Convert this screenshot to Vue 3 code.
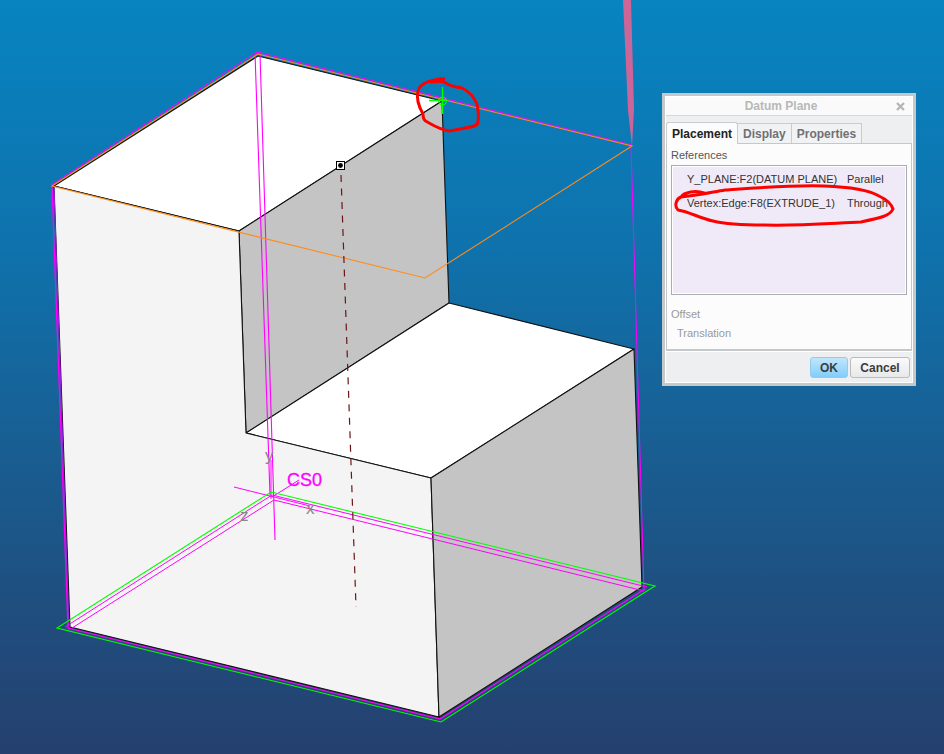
<script setup>
import { ref } from 'vue'

const tabs = ['Placement', 'Display', 'Properties']
const active = ref('Placement')
const references = [
  { name: 'Y_PLANE:F2(DATUM PLANE)', constraint: 'Parallel' },
  { name: 'Vertex:Edge:F8(EXTRUDE_1)', constraint: 'Through' }
]
</script>

<template>
  <main class="viewport">
    <svg class="model" viewBox="0 0 944 754" preserveAspectRatio="xMinYMin meet" role="img" aria-label="Extruded step model">
      <!-- solid faces -->
      <g stroke="#111" stroke-width="1.1" stroke-linejoin="round">
        <path fill="#fff" d="M54 186 258 56 442 101 239 231Z" />
        <path fill="#c4c4c4" d="M239 231 442 101 449 303 246 433Z" />
        <path fill="#fff" d="M246 433 449 303 634 349 431 478Z" />
        <path fill="#f4f4f4" d="M54 186 239 231 246 433 431 478 439 717 70 627Z" />
        <path fill="#c4c4c4" d="M431 478 634 349 642 587 439 717Z" />
      </g>
      <path d="M623 0H631L634 110 632 146 628 110Z" fill="#cc6699" />
      <!-- datum outlines -->
      <g fill="none" stroke="#ff00ff">
        <path d="M51 185 257 52 632 145" />
        <path d="M255 53 270 495M260 53 275 540M255 53H261" stroke-width="1.1" />
        <path d="M54 188 69 630" stroke="#a020e0" />
        <path d="M52 186 68 628 440 719 645 589" stroke-width="1.2" />
        <path d="M644 591 631 146" />
        <path d="M65 627 272 495 647 587M72 628 274 500 644 591M234 487 310 506M272 497 299 480M271 460V499" />
      </g>
      <path d="M271 492 655 586 441 722 57 628Z" fill="none" stroke="#00ff00" stroke-width="1.1" />
      <path d="M52 186 258 54 632 146 425 278Z" fill="none" stroke="#ff8c1a" stroke-width="1.1" />
      <!-- axis -->
      <path d="M341 175 356 607" stroke="#6b1616" stroke-width="1.2" stroke-dasharray="7 6.500" />
      <rect x="336.500" y="161.500" width="8" height="8" fill="#fff" stroke="#000" />
      <circle cx="340.500" cy="165.500" r="2.400" fill="#000" />
      <!-- coordinate system -->
      <text x="287" y="486" class="csys">CS0</text>
      <g class="axis-name">
        <text x="265" y="461">y</text>
        <text x="306" y="514">x</text>
        <text x="240" y="521">z</text>
      </g>
      <!-- selected vertex -->
      <g fill="none" stroke="#00ff00">
        <path d="M442.500 87V114M429 100.500H447" stroke-width="1.300" />
        <circle cx="442.500" cy="101" r="4" />
      </g>
      <path class="mark" d="M431 82C436 79 440 78 444 79C434 79 420 82 418 91C416 99 419 107 423 114C423 121 426 121 429 123C436 127 443 130 449 131C455 130 460 129 465 128C472 127 478 126 478 122C479 115 478 109 477 104C474 97 468 91 462 88C455 87 448 85 444 82C440 81 437 81 434 82" />
    </svg>

    <section class="dialog" role="dialog" aria-labelledby="dialog-title">
      <header class="title">
        <h1 id="dialog-title">Datum Plane</h1>
        <button class="close" type="button" aria-label="Close">
          <svg viewBox="0 0 9 9" width="9" height="9"><path d="M1 1 8 8M8 1 1 8" stroke="#b4b4b4" stroke-width="2.200" /></svg>
        </button>
      </header>
      <nav class="tabs" role="tablist">
        <button v-for="tab in tabs" :key="tab" type="button" role="tab" :aria-selected="active === tab"
          :class="['tab', { active: active === tab }]" @click="active = tab">{{ tab }}</button>
      </nav>
      <div class="pane" role="tabpanel">
        <h2 id="refs-label" class="label">References</h2>
        <div class="list">
          <table aria-labelledby="refs-label">
            <tbody>
              <tr v-for="row in references" :key="row.name">
                <td class="name">{{ row.name }}</td>
                <td>{{ row.constraint }}</td>
              </tr>
            </tbody>
          </table>
          <svg class="note" viewBox="0 0 224 44" width="224" height="44" aria-hidden="true">
            <path class="mark" d="M30 9C22 6 10 8 7 13C20 12 34 9 51 6C80 4 115 1 150 2C179 3 195 6 205 12C216 17 218 22 219 25C216 32 206 34 187 38C160 39 125 42 90 41C70 41 51 40 39 37C25 34 16 28 4 26C0 22 2 15 7 13" />
          </svg>
        </div>
        <h2 class="label muted">Offset</h2>
        <p class="sub muted">Translation</p>
      </div>
      <footer class="actions">
        <button class="action ok" type="button">OK</button>
        <button class="action cancel" type="button">Cancel</button>
      </footer>
    </section>
  </main>
</template>

<style>
body {
  margin: 0;
}
</style>

<style scoped>
.viewport {
  position: relative;
  min-height: 100vh;
  overflow: hidden;
  background: linear-gradient(#0784c1, #0f72ac 33%, #1b598c 66%, #25406e);
  font-family: "Liberation Sans", Arial, sans-serif;
}
.model {
  display: block;
  width: 100%;
}
.mark {
  fill: none;
  stroke: #ff0000;
  stroke-width: 3;
  stroke-linecap: round;
  stroke-linejoin: round;
}
.csys {
  fill: #ff00ff;
  stroke: #ff00ff;
  stroke-width: 0.3;
  font-size: 18px;
}
.axis-name {
  fill: #888;
  font-size: 17px;
}
.dialog {
  position: absolute;
  top: 93px;
  left: 662px;
  box-sizing: border-box;
  width: 254px;
  padding: 1px;
  border: 3px solid #c4c8cb;
  background: #edeff1;
  box-shadow: inset 0 0 0 1px #fff;
}
.title {
  display: flex;
  align-items: center;
  height: 18px;
  padding: 0 7px 0 0;
  border-bottom: 1px solid #cfdbe3;
  background: #fafafa;
}
h1 {
  flex: 1;
  margin: 0;
  color: #b8b8b8;
  font-size: 12px;
  line-height: 18px;
  text-align: center;
}
button {
  padding: 0;
  font: bold 12px/16px "Liberation Sans", Arial, sans-serif;
}
.close {
  display: flex;
  border: 0;
  background: none;
}
.tabs {
  display: flex;
  align-items: flex-end;
  margin-top: 6px;
}
.tab {
  height: 20px;
  padding: 0 5px;
  border: solid #c9cccf;
  border-width: 1px 1px 0 0;
  background: #f1f2f3;
  color: #707074;
}
.tab.active {
  position: relative;
  height: 22px;
  margin-bottom: -1px;
  border-left-width: 1px;
  border-radius: 3px 3px 0 0;
  background: #fcfcfc;
  color: #222;
}
.pane {
  padding: 3px 4px 8px 4px;
  border: 1px solid #c4c8cb;
  border-bottom-width: 2px;
  background: #fcfcfc;
}
.label,
.sub {
  margin: 0;
  color: #555;
  font-size: 11px;
  font-weight: normal;
  line-height: 16px;
}
.list {
  position: relative;
  box-sizing: border-box;
  height: 130px;
  margin: 2px 0 11px;
  padding: 1px 0 0 15px;
  border: 1px solid #aaadb0;
  background: #f0eaf8;
  box-shadow: inset 0 0 0 1px #fff;
}
table {
  border-collapse: collapse;
  color: #333;
  font-size: 11px;
  line-height: 24px;
  white-space: nowrap;
}
td {
  padding: 0;
}
.name {
  min-width: 160px;
}
.note {
  position: absolute;
  top: 18px;
  left: 2px;
}
.label.muted,
.sub.muted {
  color: #999;
}
.sub {
  padding: 3px 0 0 6px;
}
.actions {
  display: flex;
  justify-content: flex-end;
  gap: 2px;
  padding: 5px 2px 4px;
  border-top: 1px solid #fff;
}
.action {
  height: 21px;
  border: 1px solid #b9bcbf;
  border-radius: 3px;
  background: linear-gradient(#fafafa, #e9e9e9);
  color: #3c3c3c;
}
.ok {
  width: 38px;
  border-color: #93cbed;
  background: linear-gradient(#c2e6fb, #82cdfa);
}
.cancel {
  width: 60px;
}
</style>
